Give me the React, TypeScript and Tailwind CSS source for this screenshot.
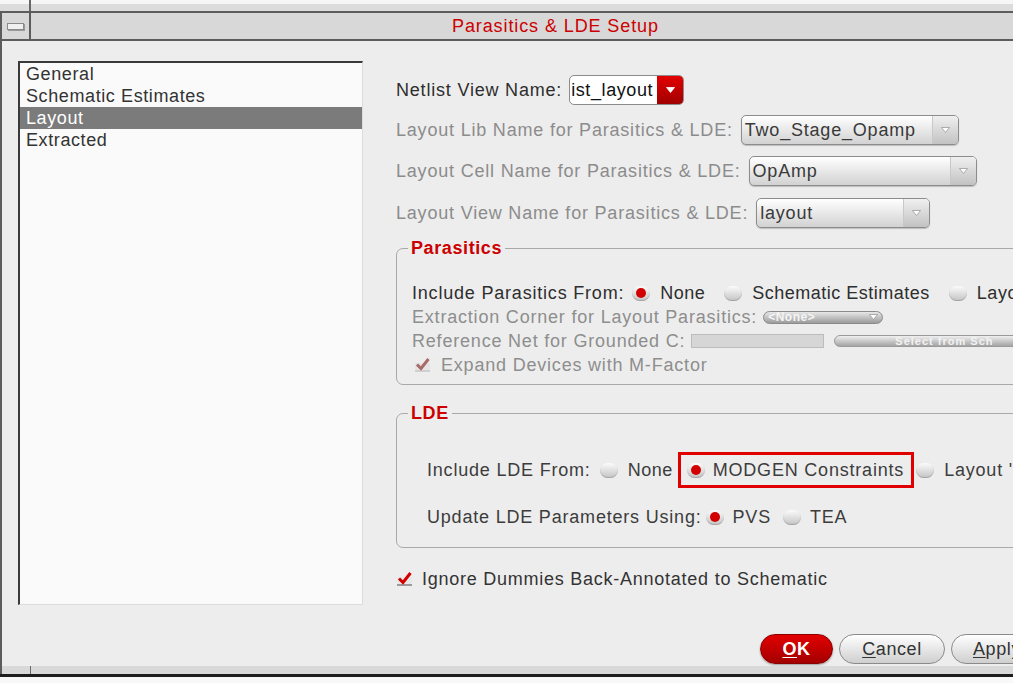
import React from "react";

function Radio({ on }: { on?: boolean }) {
  return (
    <span className="flex h-[15px] w-[18px] shrink-0 items-center justify-center rounded-full bg-linear-to-b from-[#fbfbfb] to-[#c4c4c4] shadow-[inset_0_-1px_1px_rgba(0,0,0,0.18)]">
      {on && <span className="h-[10px] w-[10px] rounded-full bg-[#d20000]" />}
    </span>
  );
}

function Check({ dim }: { dim?: boolean }) {
  const c = dim ? "#a86a6a" : "#d40000";
  return (
    <svg width="17" height="16" viewBox="0 0 17 16" className="shrink-0">
      <rect x="1" y="6" width="15" height="9" fill={dim ? "#e4e4e4" : "#e8e8e8"} />
      <rect x="1" y="13" width="15" height="2" fill={dim ? "#cfcfcf" : "#9a9a9a"} />
      <path d="M3 7.5 L7 11.5 L14.5 2" fill="none" stroke={c} strokeWidth="3" />
    </svg>
  );
}

function Arrow({ dark }: { dark?: boolean }) {
  return (
    <svg width="9" height="6" viewBox="0 0 9 6">
      <path d="M0.5 0.5 H8.5 L4.5 5.5 Z" fill="#ffffff" stroke={dark ? "#ffffff" : "#9a9a9a"} strokeWidth="0.8" />
    </svg>
  );
}

function Combo({ value, w }: { value: string; w: string }) {
  return (
    <div
      className={`${w} ml-[8px] flex h-[30px] shrink-0 items-stretch overflow-hidden rounded-[5px] border border-[#8c8c8c] bg-linear-to-b from-white to-[#d2d2d2] shadow-[0_1px_1px_rgba(0,0,0,0.2)]`}
    >
      <div className="flex flex-1 items-center pl-[3px] text-[#3a3a3a]">{value}</div>
      <div className="flex w-[26px] items-center justify-center border-l border-[#c8c8c8] bg-linear-to-b from-[#f0f0f0] to-[#c2c2c2]">
        <Arrow />
      </div>
    </div>
  );
}

function Opt({ on, label, gap = "gap-[10px]" }: { on?: boolean; label: string; gap?: string }) {
  return (
    <div className={`flex items-center ${gap}`}>
      <Radio on={on} />
      <span>{label}</span>
    </div>
  );
}

export default function App() {
  return (
    <div className="flex h-[683px] w-[1013px] flex-col overflow-hidden bg-[#ededed] font-['Liberation_Sans',Arial,sans-serif] text-[18px] tracking-[0.6px] text-[#2e2e2e]">
      <div className="flex h-[11px] shrink-0 bg-[linear-gradient(#f6f6f6_4px,#dcdcdc_4px)]">
        <div className="w-[31px] border-r-2 border-[#666666]" />
      </div>

      <div className="flex h-[30px] shrink-0 border-y-2 border-[#5c5c5c] bg-[#d8d8d8]">
        <div className="flex w-[31px] items-center justify-center border-x-2 border-[#5c5c5c]">
          <div className="h-[7px] w-[17px] border border-[#8a8a8a] bg-[#f0f0f0] shadow-[1px_1px_0_#9a9a9a]" />
        </div>
        <div className="flex items-center pl-[421px] tracking-[0.9px] text-[#cc0000]">Parasitics &amp; LDE Setup</div>
      </div>

      <div className="flex flex-1 overflow-hidden border-l-2 border-[#5c5c5c] pl-[16px]">
        <div className="mt-[20px] h-[544px] w-[345px] shrink-0 border-t-2 border-l-2 border-r border-b border-t-[#3a3a3a] border-l-[#3a3a3a] border-r-[#dcdcdc] border-b-[#dcdcdc] bg-[#fafafa]">
          {["General", "Schematic Estimates", "Layout", "Extracted"].map((t) => (
            <div
              key={t}
              className={`h-[22px] pl-[6px] leading-[22px] ${t === "Layout" ? "bg-[#7b7b7b] text-white" : "text-[#333333]"}`}
            >
              {t}
            </div>
          ))}
        </div>

        <div className="ml-[33px] flex w-[700px] shrink-0 flex-col pt-[34px] tracking-[0.8px]">
          <div className="flex h-[30px] items-center">
            <span>Netlist View Name:</span>
            <div className="ml-[7px] flex h-[30px] w-[115px] items-stretch overflow-hidden rounded-[5px] border border-[#8c8c8c] bg-white">
              <div className="flex flex-1 items-center overflow-hidden pl-[1px] tracking-[0.6px] text-[#111111]">ist_layout</div>
              <div className="flex w-[26px] items-center justify-center bg-linear-to-b from-[#e40000] to-[#a00000]">
                <Arrow dark />
              </div>
            </div>
          </div>
          <div className="mt-[10px] flex h-[30px] items-center text-[#8c8c8c]">
            <span>Layout Lib Name for Parasitics &amp; LDE:</span>
            <Combo value="Two_Stage_Opamp" w="w-[218px]" />
          </div>
          <div className="mt-[11px] flex h-[30px] items-center text-[#8c8c8c]">
            <span>Layout Cell Name for Parasitics &amp; LDE:</span>
            <Combo value="OpAmp" w="w-[228px]" />
          </div>
          <div className="mt-[12px] flex h-[30px] items-center text-[#8c8c8c]">
            <span>Layout View Name for Parasitics &amp; LDE:</span>
            <Combo value="layout" w="w-[174px]" />
          </div>

          <fieldset className="mt-[10px] w-[690px] rounded-[7px] border border-[#a9a9a9] px-[10px] pt-[22px] pb-[7px]">
            <legend className="ml-[1px] px-[3px] leading-[21px] font-bold tracking-[0.6px] text-[#cc0000]">Parasitics</legend>
            <div className="pl-[5px]">
              <div className="flex h-[24px] items-center">
                <span>Include Parasitics From:</span>
                <div className="ml-[8px] flex items-center gap-[19px] tracking-[0.5px]">
                  <Opt on label="None" />
                  <Opt label="Schematic Estimates" />
                  <Opt label="Layout" />
                </div>
              </div>
              <div className="flex h-[24px] items-center text-[#8e8e8e]">
                <span>Extraction Corner for Layout Parasitics:</span>
                <div className="ml-[6px] flex h-[13px] w-[120px] items-center justify-between rounded-full border border-[#8a8a8a] bg-linear-to-b from-[#e8e8e8] to-[#9c9c9c] px-[4px] text-[12px] leading-none font-bold tracking-[0.5px] text-[#f4f4f4]">
                  <span>&lt;None&gt;</span>
                  <Arrow />
                </div>
              </div>
              <div className="flex h-[24px] items-center text-[#8e8e8e]">
                <span>Reference Net for Grounded C:</span>
                <div className="ml-[6px] h-[14px] w-[133px] border border-[#bcbcbc] bg-[#d6d6d6]" />
                <div className="ml-[10px] flex h-[12px] w-[220px] items-center overflow-hidden rounded-l-full border border-[#9a9a9a] bg-linear-to-b from-[#f0f0f0] to-[#a4a4a4] pl-[60px] text-[11px] leading-none font-bold tracking-[1px] text-[#f2f2f2]">
                  Select from Sch
                </div>
              </div>
              <div className="flex h-[24px] items-center text-[#8e8e8e]">
                <span className="ml-[2px]">
                  <Check dim />
                </span>
                <span className="ml-[10px]">Expand Devices with M-Factor</span>
              </div>
            </div>
          </fieldset>

          <fieldset className="mt-[18px] w-[690px] rounded-[7px] border border-[#a9a9a9] px-[10px] pt-[28px] pb-[18px]">
            <legend className="ml-[1px] px-[3px] leading-[21px] font-bold tracking-[0.6px] text-[#cc0000]">LDE</legend>
            <div className="pl-[20px] text-[#3c3c3c]">
              <div className="flex h-[36px] items-center">
                <span>Include LDE From:</span>
                <div className="ml-[9px] tracking-[0.5px]">
                  <Opt label="None" />
                </div>
                <div className="ml-[5px] flex h-[36px] items-center gap-[8px] border-[3px] border-[#e00000] pr-[7px] pl-[6px]">
                  <Radio on />
                  <span>MODGEN Constraints</span>
                </div>
                <div className="ml-[2px]">
                  <Opt label="Layout 'layout'" />
                </div>
              </div>
              <div className="mt-[17px] flex h-[24px] items-center">
                <span>Update LDE Parameters Using:</span>
                <div className="ml-[4px] flex items-center gap-[12px]">
                  <Opt on label="PVS" gap="gap-[9px]" />
                  <Opt label="TEA" gap="gap-[9px]" />
                </div>
              </div>
            </div>
          </fieldset>

          <div className="mt-[19px] flex h-[24px] items-center text-[#333333]">
            <Check />
            <span className="ml-[9px] tracking-[0.75px]">Ignore Dummies Back-Annotated to Schematic</span>
          </div>

          <div className="mt-[43px] ml-[364px] flex gap-[6px] tracking-[0.6px]">
            <button className="flex h-[30px] w-[73px] shrink-0 items-center justify-center rounded-full border border-[#8a0000] bg-linear-to-b from-[#e20000] to-[#a40000] font-bold text-white shadow-[0_1px_2px_rgba(0,0,0,0.35)]">
              <span className="underline underline-offset-2">O</span>K
            </button>
            <button className="flex h-[30px] w-[106px] shrink-0 items-center justify-center rounded-full border border-[#8a8a8a] bg-linear-to-b from-white to-[#cfcfcf] text-[#333333]">
              <span className="underline underline-offset-2">C</span>ancel
            </button>
            <button className="flex h-[30px] w-[92px] shrink-0 items-center justify-center rounded-full border border-[#8a8a8a] bg-linear-to-b from-white to-[#cfcfcf] text-[#333333]">
              <span className="underline underline-offset-2">A</span>pply
            </button>
          </div>
        </div>
      </div>

      <div className="flex h-[8px] shrink-0 border-l-2 border-[#5c5c5c] bg-[#d9d9d9]">
        <div className="w-[29px] border-r border-[#6a6a6a]" />
      </div>
      <div className="h-[3px] shrink-0 bg-[#1e1e1e]" />
      <div className="h-[6px] shrink-0 bg-[#f8f8f8]" />
    </div>
  );
}
